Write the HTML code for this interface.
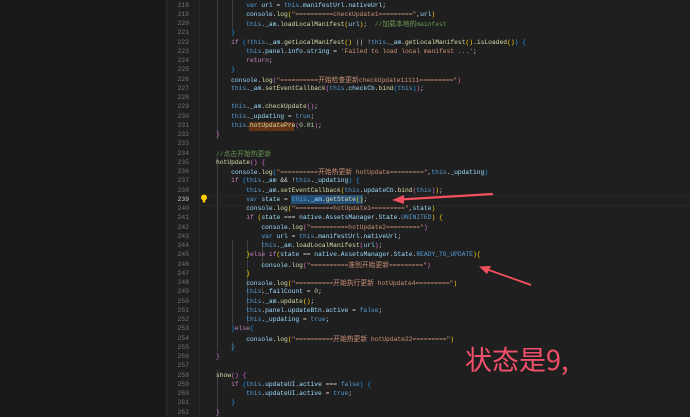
<!DOCTYPE html>
<html><head><meta charset="utf-8">
<style>
html,body{margin:0;padding:0;width:690px;height:417px;overflow:hidden;background:#1f1f1f;}
#side{position:absolute;left:0;top:0;width:166px;height:417px;background:#181818;border-right:1px solid #2a2a2a;}
.ln{position:absolute;left:160px;width:29px;text-align:right;font:6.3px "Liberation Mono",monospace;color:#6e7681;}
.cl{position:absolute;left:216px;white-space:pre;font:6.3px "Liberation Mono","Noto Sans CJK SC",monospace;color:#d4d4d4;}
.z{font-family:"Noto Sans CJK SC",sans-serif;font-size:6.8px;}
.k{color:#569cd6}.v{color:#9cdcfe}.f{color:#dcdcaa}.s{color:#ce9178}.c{color:#c586c0}.g{color:#6a9955}.n{color:#b5cea8}.y{color:#ffd700}.p{color:#da70d6}.b{color:#179fff}.w{color:#d4d4d4}
.guide{position:absolute;width:1px;background:#404040;}
</style></head><body>
<div id="side"></div>
<div style="position:absolute;left:199px;top:0;width:1px;height:417px;background:#2b2b2b"></div>
<div class="guide" style="left:217px;top:0;height:139px"></div>
<div class="guide" style="left:217px;top:157px;height:194px"></div>
<div class="guide" style="left:217px;top:370px;height:47px"></div>
<div class="guide" style="left:232px;top:0;height:28px"></div>
<div class="guide" style="left:232px;top:240px;height:84px"></div>
<div class="guide" style="left:232px;top:342px;height:9px"></div>
<div class="guide" style="left:247px;top:240px;height:84px"></div>
<div class="guide" style="left:262px;top:240px;height:28px"></div>
<div class="guide" style="left:262px;top:286px;height:9px"></div>
<div style="position:absolute;left:200px;top:194.5px;width:490px;height:9px;border-top:1px solid #282828;border-bottom:1px solid #282828"></div>
<div style="position:absolute;left:291px;top:195px;width:72px;height:9px;background:#264f78"></div>
<div style="position:absolute;left:249px;top:121.5px;width:45px;height:9px;background:#613214"></div>
<svg style="position:absolute;left:200px;top:194px" width="8" height="10" viewBox="0 0 8 10"><circle cx="4" cy="3.5" r="3" fill="#ffcc00"/><rect x="2.8" y="6" width="2.4" height="2.5" fill="#ffcc00"/></svg>
<div id="lines"></div>
<script>
const L=[
[218,'        <span class="k">var</span> <span class="v">url</span> = <span class="k">this</span>.<span class="v">manifestUrl</span>.<span class="v">nativeUrl</span>;'],
[219,'        <span class="v">console</span>.<span class="f">log</span><span class="y">(</span><span class="s">"==========checkUpdate1========="</span>,<span class="v">url</span><span class="y">)</span>'],
[220,'        <span class="k">this</span>.<span class="v">_am</span>.<span class="f">loadLocalManifest</span><span class="y">(</span><span class="v">url</span><span class="y">)</span>;  <span class="g">//<span class="z">加载本地的</span>mainfest</span>'],
[221,'    <span class="b">}</span>'],
[222,'    <span class="c">if</span> <span class="b">(</span>!<span class="k">this</span>.<span class="v">_am</span>.<span class="f">getLocalManifest</span><span class="y">()</span> || !<span class="k">this</span>.<span class="v">_am</span>.<span class="f">getLocalManifest</span><span class="y">()</span>.<span class="f">isLoaded</span><span class="y">()</span><span class="b">)</span> <span class="b">{</span>'],
[223,'        <span class="k">this</span>.<span class="v">panel</span>.<span class="v">info</span>.<span class="v">string</span> = <span class="s">\'Failed to load local manifest ...\'</span>;'],
[224,'        <span class="c">return</span>;'],
[225,'    <span class="b">}</span>'],
[226,'    <span class="v">console</span>.<span class="f">log</span><span class="p">(</span><span class="s">"==========<span class="z">开始检查更新</span>checkUpdate11111========="</span><span class="p">)</span>'],
[227,'    <span class="k">this</span>.<span class="v">_am</span>.<span class="f">setEventCallback</span><span class="p">(</span><span class="k">this</span>.<span class="v">checkCb</span>.<span class="f">bind</span><span class="b">(</span><span class="k">this</span><span class="b">)</span><span class="p">)</span>;'],
[228,''],
[229,'    <span class="k">this</span>.<span class="v">_am</span>.<span class="f">checkUpdate</span><span class="p">()</span>;'],
[230,'    <span class="k">this</span>.<span class="v">_updating</span> = <span class="k">true</span>;'],
[231,'    <span class="k">this</span>.<span class="f">hotUpdatePre</span><span class="p">(</span><span class="n">0.01</span><span class="p">)</span>;'],
[232,'<span class="p">}</span>'],
[233,''],
[234,'<span class="g">//<span class="z">点击开始热更新</span></span>'],
[235,'<span class="f">hotUpdate</span><span class="p">()</span> <span class="p">{</span>'],
[236,'    <span class="v">console</span>.<span class="f">log</span><span class="b">(</span><span class="s">"==========<span class="z">开始热更新</span> hotUpdate========="</span>,<span class="k">this</span>.<span class="v">_updating</span><span class="b">)</span>'],
[237,'    <span class="c">if</span> <span class="b">(</span><span class="k">this</span>.<span class="v">_am</span> &amp;&amp; !<span class="k">this</span>.<span class="v">_updating</span><span class="b">)</span> <span class="b">{</span>'],
[238,'        <span class="k">this</span>.<span class="v">_am</span>.<span class="f">setEventCallback</span><span class="y">(</span><span class="k">this</span>.<span class="v">updateCb</span>.<span class="f">bind</span><span class="p">(</span><span class="k">this</span><span class="p">)</span><span class="y">)</span>;'],
[239,'        <span class="k">var</span> <span class="v">state</span> = <span class="k">this</span>.<span class="v">_am</span>.<span class="f">getState</span><span class="y">()</span>;'],
[240,'        <span class="v">console</span>.<span class="f">log</span><span class="y">(</span><span class="s">"==========hotUpdate1========="</span>,<span class="v">state</span><span class="y">)</span>'],
[241,'        <span class="c">if</span> <span class="y">(</span><span class="v">state</span> === <span class="v">native</span>.<span class="v">AssetsManager</span>.<span class="v">State</span>.<span class="k">UNINITED</span><span class="y">)</span> <span class="y">{</span>'],
[242,'            <span class="v">console</span>.<span class="f">log</span><span class="p">(</span><span class="s">"==========hotUpdate2========="</span><span class="p">)</span>'],
[243,'            <span class="k">var</span> <span class="v">url</span> = <span class="k">this</span>.<span class="v">manifestUrl</span>.<span class="v">nativeUrl</span>;'],
[244,'            <span class="k">this</span>.<span class="v">_am</span>.<span class="f">loadLocalManifest</span><span class="p">(</span><span class="v">url</span><span class="p">)</span>;'],
[245,'        <span class="y">}</span><span class="c">else</span> <span class="c">if</span><span class="y">(</span><span class="v">state</span> == <span class="v">native</span>.<span class="v">AssetsManager</span>.<span class="v">State</span>.<span class="k">READY_TO_UPDATE</span><span class="y">){</span>'],
[246,'            <span class="v">console</span>.<span class="f">log</span><span class="p">(</span><span class="s">"==========<span class="z">准别开始更新</span>========="</span><span class="p">)</span>'],
[247,'        <span class="y">}</span>'],
[248,'        <span class="v">console</span>.<span class="f">log</span><span class="y">(</span><span class="s">"==========<span class="z">开始执行更新</span> hotUpdate4========="</span><span class="y">)</span>'],
[249,'        <span class="k">this</span>.<span class="v">_failCount</span> = <span class="n">0</span>;'],
[250,'        <span class="k">this</span>.<span class="v">_am</span>.<span class="f">update</span><span class="y">()</span>;'],
[251,'        <span class="k">this</span>.<span class="v">panel</span>.<span class="v">updateBtn</span>.<span class="v">active</span> = <span class="k">false</span>;'],
[252,'        <span class="k">this</span>.<span class="v">_updating</span> = <span class="k">true</span>;'],
[253,'    <span class="b">}</span><span class="c">else</span><span class="b">{</span>'],
[254,'        <span class="v">console</span>.<span class="f">log</span><span class="y">(</span><span class="s">"==========<span class="z">开始热更新</span> hotUpdate22========="</span><span class="y">)</span>'],
[255,'    <span class="b">}</span>'],
[256,'<span class="p">}</span>'],
[257,''],
[258,'<span class="f">show</span><span class="p">()</span> <span class="p">{</span>'],
[259,'    <span class="c">if</span> <span class="b">(</span><span class="k">this</span>.<span class="v">updateUI</span>.<span class="v">active</span> === <span class="k">false</span><span class="b">)</span> <span class="b">{</span>'],
[260,'        <span class="k">this</span>.<span class="v">updateUI</span>.<span class="v">active</span> = <span class="k">true</span>;'],
[261,'    <span class="b">}</span>'],
[262,'<span class="p">}</span>']
];
let h='';
L.forEach((l,i)=>{const t=0.6+i*9.25;
h+=`<div class="ln" style="top:${t}px;line-height:9.25px;${l[0]==239?'color:#cccccc':''}">${l[0]}</div>`;
h+=`<div class="cl" style="top:${t}px;line-height:9.25px">${l[1]}</div>`;});
document.getElementById('lines').innerHTML=h;
</script>
<svg style="position:absolute;left:0;top:0" width="690" height="417">
<line x1="493" y1="194" x2="400" y2="199.5" stroke="#f2505f" stroke-width="2.2"/>
<polygon points="392,200 404,195 404,204" fill="#f2505f"/>
<line x1="531" y1="285" x2="486" y2="269" stroke="#f2505f" stroke-width="1.8"/>
<polygon points="479,266.5 491,266 487,274" fill="#f2505f"/>
</svg>
<div style="position:absolute;left:465px;top:342px;font:27px 'Noto Sans CJK SC','WenQuanYi Zen Hei',sans-serif;color:#f2506a;line-height:34px">状态是9,</div>
</body></html>
